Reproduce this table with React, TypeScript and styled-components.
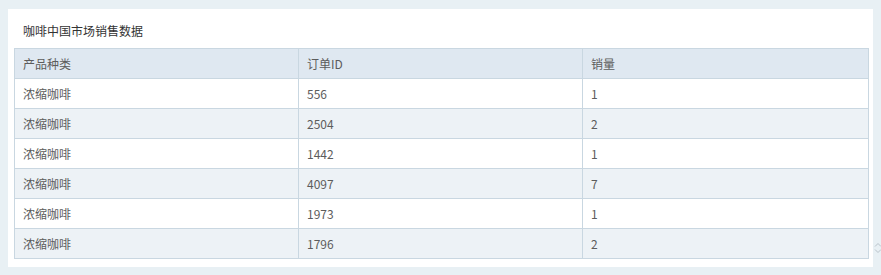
import React from 'react';
import styled, { createGlobalStyle } from 'styled-components';

const GlobalStyle = createGlobalStyle`
  html, body {
    margin: 0;
    padding: 0;
    background: #e8f0f4;
    font-family: "Noto Sans CJK SC", "Noto Sans", sans-serif;
  }
`;

const rows = [
  { kind: '浓缩咖啡', id: '556', qty: 1 },
  { kind: '浓缩咖啡', id: '2504', qty: 2 },
  { kind: '浓缩咖啡', id: '1442', qty: 1 },
  { kind: '浓缩咖啡', id: '4097', qty: 7 },
  { kind: '浓缩咖啡', id: '1973', qty: 1 },
  { kind: '浓缩咖啡', id: '1796', qty: 2 },
];

const App = () => {
  return (
    <Page>
      <GlobalStyle />
      <Card>
        <Title>咖啡中国市场销售数据</Title>
        <Table>
          <colgroup>
            <col style={{ width: 284 }} />
            <col style={{ width: 284 }} />
            <col />
          </colgroup>
          <thead>
            <tr>
              <Th>产品种类</Th>
              <Th>订单ID</Th>
              <Th>销量</Th>
            </tr>
          </thead>
          <tbody>
            {rows.map((r, i) => (
              <Row key={i} $odd={i % 2 === 1}>
                <Td>{r.kind}</Td>
                <Td>{r.id}</Td>
                <Td>{r.qty}</Td>
              </Row>
            ))}
          </tbody>
        </Table>
      </Card>
      <Side>
        <Spinner width="8" height="12" viewBox="0 0 8 12">
          <path d="M1 4.5 L4 1.5 L7 4.5" />
          <path d="M1 7.5 L4 10.5 L7 7.5" />
        </Spinner>
      </Side>
    </Page>
  );
};

export default App;

const Page = styled.div`
  display: flex;
  align-items: flex-start;
  padding: 9px 0 8px 8px;
  width: 881px;
  box-sizing: border-box;
`;

const Card = styled.div`
  width: 865px;
  background: #fff;
  padding: 0 4px 8px 6px;
  box-sizing: border-box;
`;

const Title = styled.div`
  height: 39px;
  line-height: 44px;
  padding-left: 9px;
  font-size: 12px;
  color: #333;
`;

const Table = styled.table`
  width: 855px;
  border-collapse: collapse;
  table-layout: fixed;
  font-size: 12px;
  color: #5c5c5c;
`;

const Th = styled.th`
  height: 30px;
  padding: 0 8px;
  text-align: left;
  font-weight: normal;
  background: #dfe8f1;
  border: 1px solid #c9d7e1;
  box-sizing: border-box;
`;

const Row = styled.tr<{ $odd: boolean }>`
  background: ${(p) => (p.$odd ? '#edf2f6' : '#fff')};
`;

const Td = styled.td`
  height: 30px;
  padding: 0 8px;
  border: 1px solid #c9d7e1;
  box-sizing: border-box;
`;

const Side = styled.div`
  display: flex;
  align-items: flex-end;
  height: 250px;
  padding-left: 1px;
`;

const Spinner = styled.svg`
  fill: none;
  stroke: #b9c3ca;
  stroke-width: 1;
  margin-bottom: 5px;
`;
